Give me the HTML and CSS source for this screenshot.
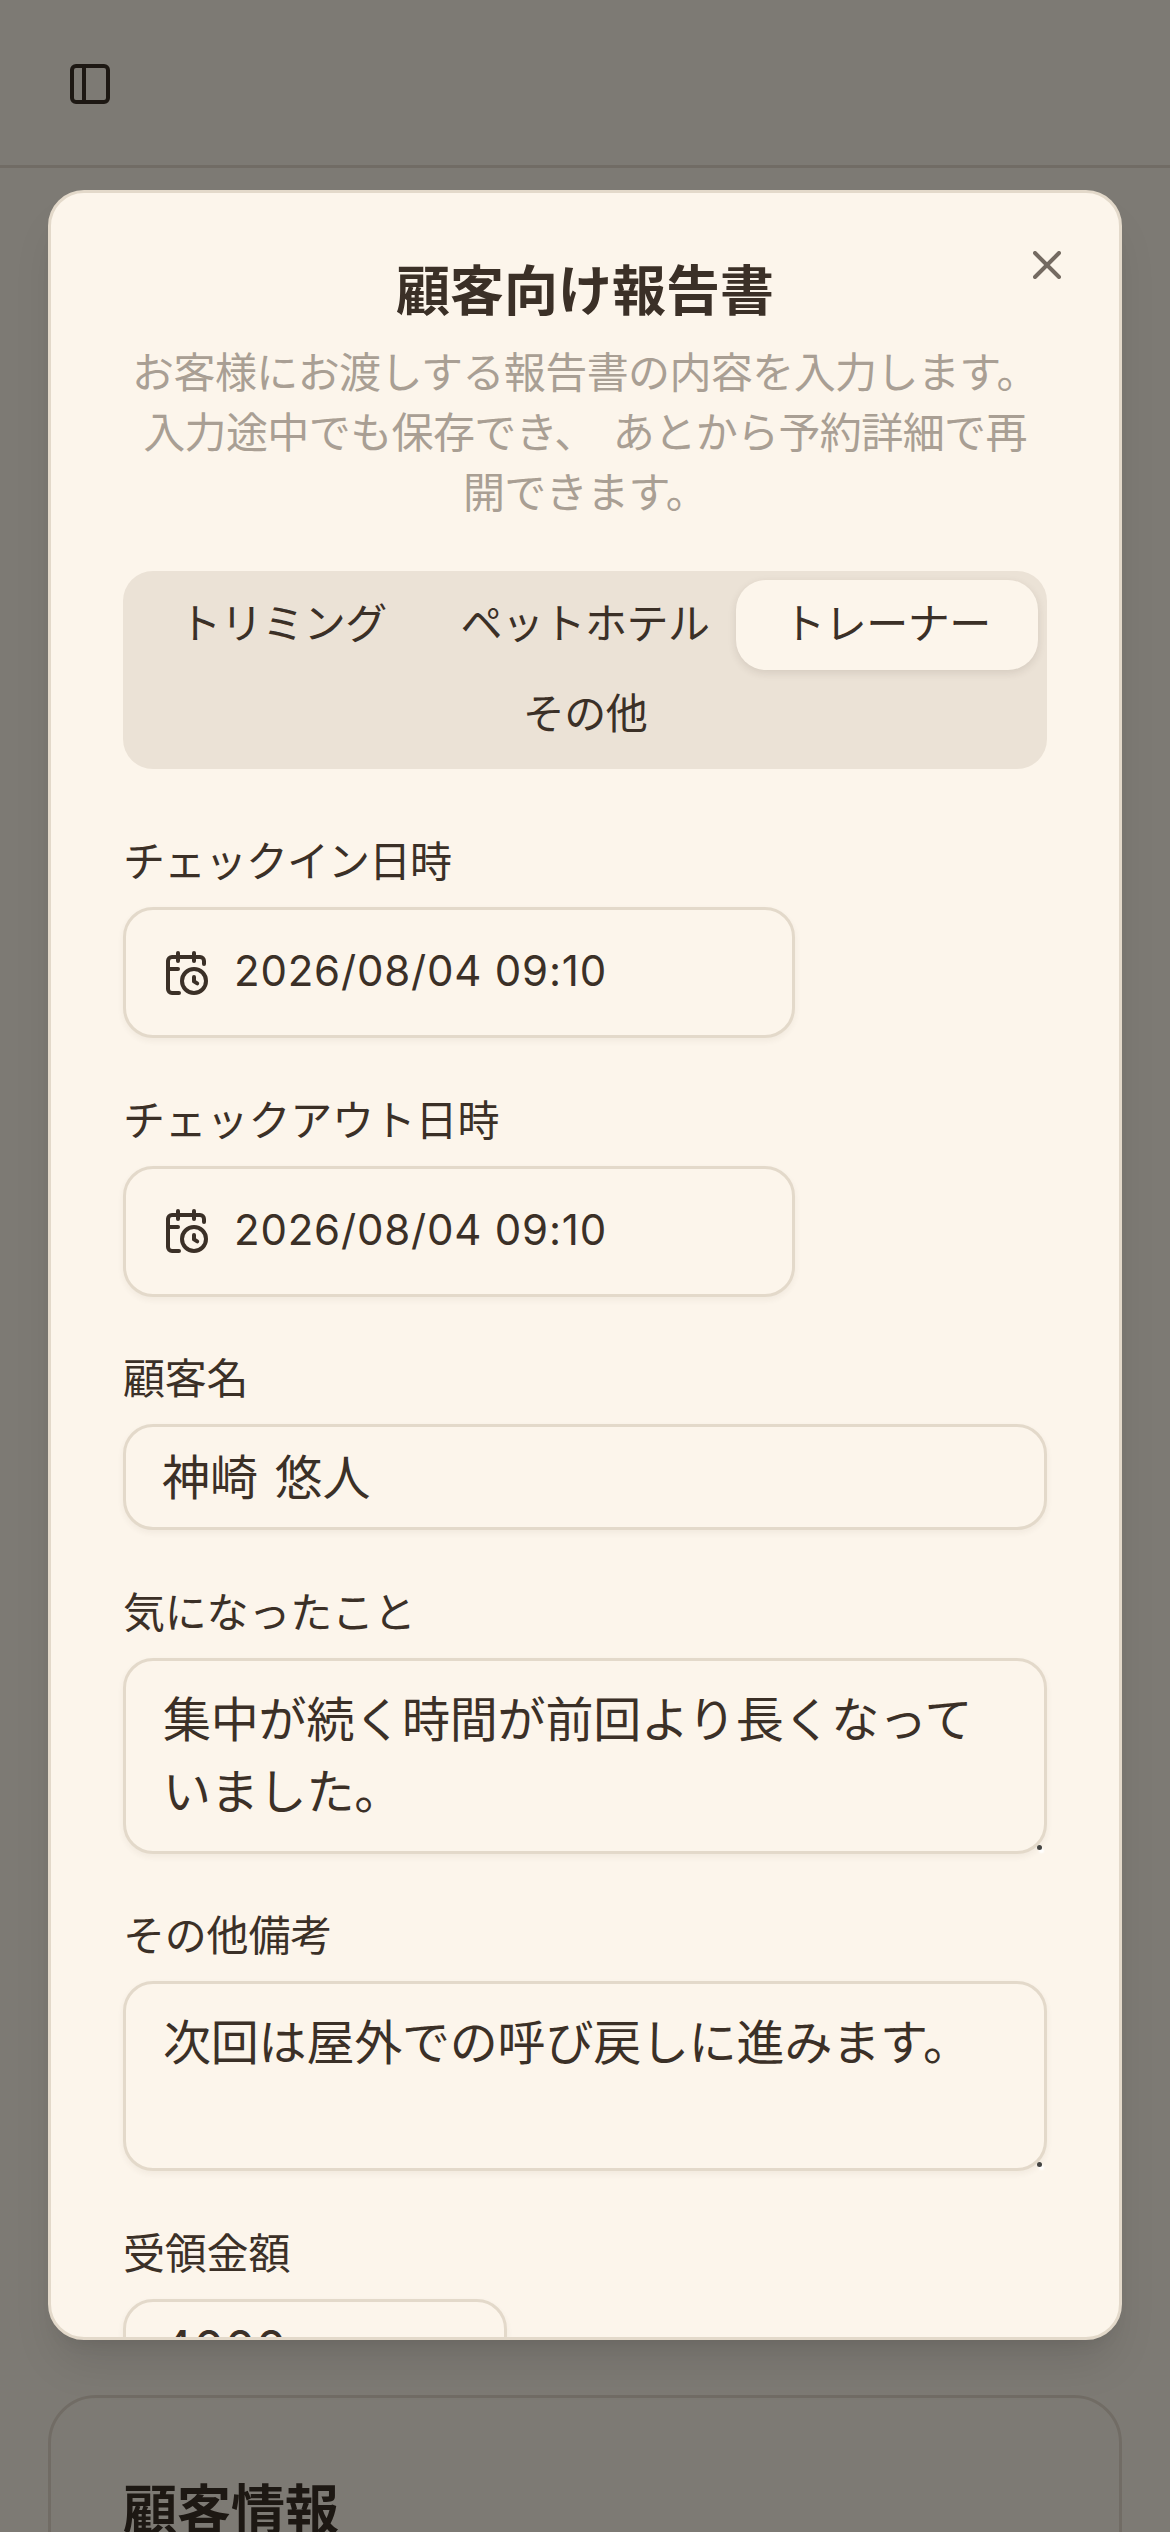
FILE: index.html
```html
<!DOCTYPE html>
<html lang="ja">
<head>
<meta charset="utf-8">
<title>顧客向け報告書</title>
<link rel="stylesheet" href="styles.css">
</head>
<body>
<div class="page">
  <header class="topbar">
    <svg class="icon" viewBox="0 0 24 24"><rect x="3" y="3" width="18" height="18" rx="2"/><path d="M9 3v18"/></svg>
  </header>
  <main class="main">
    <section class="card">
      <h2 class="card-title">顧客情報</h2>
    </section>
  </main>
</div>
<div class="overlay">
  <div class="modal">
    <svg class="icon close" viewBox="0 0 24 24"><path d="M18 6 6 18"/><path d="m6 6 12 12"/></svg>
    <h1 class="title">顧客向け報告書</h1>
    <p class="desc">お客様にお渡しする報告書の内容を入力します。入力途中でも保存でき、 あとから予約詳細で再開できます。</p>
    <div class="tabs">
      <div class="tab">トリミング</div>
      <div class="tab">ペットホテル</div>
      <div class="tab active">トレーナー</div>
      <div class="tab">その他</div>
    </div>
    <div class="form">
      <div class="field">
        <div class="label label-tight">チェックイン日時</div>
        <div class="control date">
          <svg class="icon" viewBox="0 0 24 24"><path d="M16 14v2.2l1.6 1"/><path d="M16 2v4"/><path d="M21 7.5V6a2 2 0 0 0-2-2H5a2 2 0 0 0-2 2v14a2 2 0 0 0 2 2h3.5"/><path d="M3 10h5"/><path d="M8 2v4"/><circle cx="16" cy="16" r="6"/></svg>
          <span class="date-value">2026/08/04 09:10</span>
        </div>
      </div>
      <div class="field">
        <div class="label">チェックアウト日時</div>
        <div class="control date">
          <svg class="icon" viewBox="0 0 24 24"><path d="M16 14v2.2l1.6 1"/><path d="M16 2v4"/><path d="M21 7.5V6a2 2 0 0 0-2-2H5a2 2 0 0 0-2 2v14a2 2 0 0 0 2 2h3.5"/><path d="M3 10h5"/><path d="M8 2v4"/><circle cx="16" cy="16" r="6"/></svg>
          <span class="date-value">2026/08/04 09:10</span>
        </div>
      </div>
      <div class="field">
        <div class="label">顧客名</div>
        <div class="control text">神崎 悠人</div>
      </div>
      <div class="field">
        <div class="label">気になったこと</div>
        <div class="area-wrap">
          <textarea class="control area area-a">集中が続く時間が前回より長くなっていました。</textarea>
        </div>
      </div>
      <div class="field">
        <div class="label">その他備考</div>
        <div class="area-wrap">
          <textarea class="control area area-b">次回は屋外での呼び戻しに進みます。</textarea>
        </div>
      </div>
      <div class="field">
        <div class="label">受領金額</div>
        <div class="control text amount">4000</div>
      </div>
    </div>
  </div>
</div>
</body>
</html>
```
FILE: styles.css
```css
* { box-sizing: border-box; }
html {
  height: 2532px;
  margin: 0;
  overflow: hidden;
}
body {
  position: relative;
  height: 2532px;
  margin: 0;
  overflow: hidden;
  background: #fbf5e9;
  color: #3b3027;
  font-family: "Inter", "Noto Sans CJK JP", sans-serif;
  font-size: 42px;
}
.page {
  height: 2532px;
  overflow: hidden;
}
.icon {
  width: 48px;
  height: 48px;
  flex: none;
  fill: none;
  stroke: currentColor;
  stroke-width: 2;
  stroke-linecap: round;
  stroke-linejoin: round;
}
.topbar {
  height: 168px;
  padding: 60px 66px 0;
  border-bottom: 3px solid #e3d9ca;
}
.main { padding: 2227px 48px 0; }
.card {
  height: 600px;
  padding: 72px;
  border: 3px solid #e3d9ca;
  border-radius: 48px;
}
.card-title {
  margin: 0;
  font-size: 54px;
  line-height: 81px;
  font-weight: 700;
}
.overlay {
  position: absolute;
  inset: 0;
  display: flex;
  align-items: center;
  justify-content: center;
  background: rgba(0, 0, 0, 0.5);
}
.modal {
  position: relative;
  width: 1074px;
  height: 2150px;
  margin-bottom: 2px;
  padding: 72px;
  overflow: hidden;
  background: #fcf5eb;
  border: 3px solid #e3d9ca;
  border-radius: 36px;
  box-shadow: 0 30px 45px -9px rgba(0, 0, 0, 0.1), 0 12px 18px -12px rgba(0, 0, 0, 0.1);
}
.close {
  position: absolute;
  top: 48px;
  right: 48px;
  opacity: 0.7;
}
.title {
  margin: 0;
  font-size: 54px;
  line-height: 54px;
  font-weight: 700;
  text-align: center;
}
.desc {
  margin: 24px 0 48px;
  padding: 0 8px;
  line-height: 60px;
  color: #a99f94;
  text-align: center;
  letter-spacing: -0.6px;
  word-spacing: 6px;
}
.tabs {
  display: flex;
  flex-wrap: wrap;
  justify-content: center;
  padding: 9px;
  background: #ebe2d6;
  border-radius: 30px;
}
.tab {
  width: 302px;
  height: 90px;
  padding-bottom: 10px;
  display: flex;
  align-items: center;
  justify-content: center;
  border-radius: 30px;
  letter-spacing: -0.5px;
}
.tab.active {
  background: #fcf5eb;
  box-shadow: 0 3px 9px rgba(60, 45, 30, 0.12);
}
.form {
  display: flex;
  flex-direction: column;
  gap: 59.5px;
  margin-top: 70px;
}
.label {
  padding-top: 2px;
  line-height: 42px;
  margin-bottom: 24px;
  letter-spacing: -0.2px;
}
.label-tight { letter-spacing: -1px; }
.control {
  display: block;
  width: 100%;
  background: #fcf5eb;
  color: inherit;
  border: 3px solid #e3d9ca;
  border-radius: 30px;
  box-shadow: 0 3px 6px rgba(60, 45, 30, 0.06);
}
.date {
  display: flex;
  align-items: center;
  gap: 24px;
  width: 672px;
  height: 131px;
  padding: 0 36px;
}
.date-value {
  margin-bottom: 4px;
  letter-spacing: 0.8px;
}
.text {
  display: flex;
  align-items: center;
  height: 106px;
  padding: 0 36px 6px;
  font-size: 48px;
  word-spacing: 3px;
}
.amount {
  width: 384px;
  padding-bottom: 8px;
  letter-spacing: 0.8px;
}
.area-wrap {
  position: relative;
}
.area-wrap::before {
  content: "";
  position: absolute;
  right: 5px;
  bottom: 4px;
  width: 5px;
  height: 5px;
  border-radius: 50%;
  background: #444442;
  box-shadow: 2px 3px 2px #fff;
  z-index: 1;
}
.area {
  padding: 23px 37px;
  font: inherit;
  font-size: 48px;
  line-height: 72px;
  letter-spacing: -0.2px;
  outline: none;
  resize: none;
  overflow: hidden;
}
.area-a { height: 196px; }
.area-b { height: 190px; }
```
